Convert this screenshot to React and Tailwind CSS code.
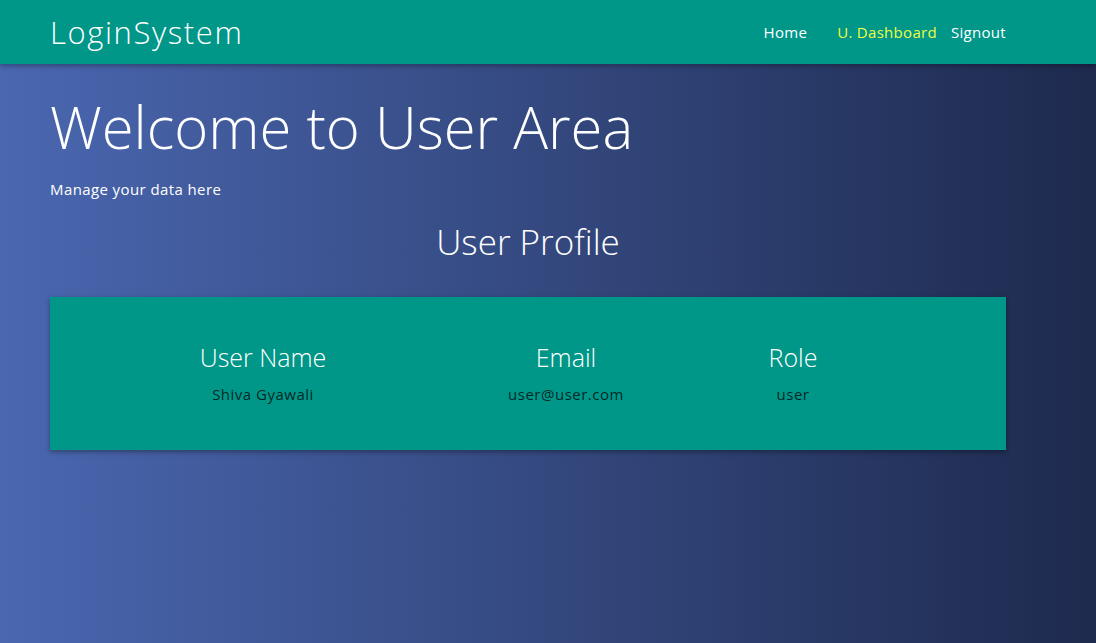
export default function App() {
  const font = { fontFamily: '"Open Sans", "DejaVu Sans", sans-serif' };
  return (
    <div
      className="min-h-[643px] w-full bg-[linear-gradient(to_right,#4a67b0,#1e2a4e)] text-white font-light"
      style={font}
    >
      <nav className="h-16 bg-[#009688] shadow-[0_2px_5px_rgba(0,0,0,0.3)] flex items-center pl-[50px] pr-[90px]">
        <div className="text-[31px] leading-none tracking-[1.6px]">LoginSystem</div>
        <div className="ml-auto flex items-center text-[15px] font-normal tracking-[0.3px]">
          <a className="text-white mr-[30px]">Home</a>
          <a className="text-[#eeff41] mr-[14px]">U. Dashboard</a>
          <a className="text-white">Signout</a>
        </div>
      </nav>
      <main className="pl-[50px] pr-[90px]">
        <h1 className="text-[58px] leading-none mt-[34px]">Welcome to User Area</h1>
        <p className="text-[15px] font-normal tracking-[0.4px] mt-[22px]">Manage your data here</p>
        <h2 className="text-[35px] text-center leading-none mt-[23px]">User Profile</h2>
        <div className="mt-[38px] h-[153px] bg-[#009688] shadow-[0_2px_5px_rgba(0,0,0,0.35)] flex pt-[48px] pl-[62px]">
          {[
            ["User Name", "Shiva Gyawali", "w-[302px]"],
            ["Email", "user@user.com", "w-[304px]"],
            ["Role", "user", "w-[150px]"],
          ].map(([h, v, w]) => (
            <div key={h} className={`${w} flex flex-col items-center`}>
              <div className="text-[25px] leading-none">{h}</div>
              <div className="text-[15px] font-normal tracking-[0.5px] text-black/75 mt-[13px]">{v}</div>
            </div>
          ))}
        </div>
      </main>
    </div>
  );
}
